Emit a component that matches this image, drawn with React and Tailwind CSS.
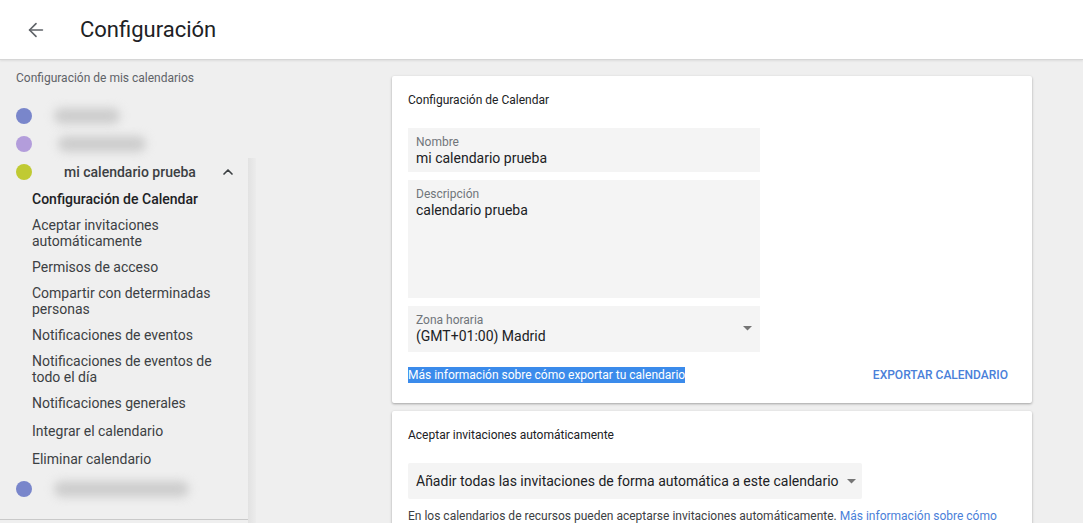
import React from 'react';
import { ArrowLeft, ChevronUp } from 'lucide-react';

const subItems = [
    { label: 'Configuración de Calendar', active: true },
    { label: 'Aceptar invitaciones\nautomáticamente' },
    { label: 'Permisos de acceso' },
    { label: 'Compartir con determinadas\npersonas' },
    { label: 'Notificaciones de eventos' },
    { label: 'Notificaciones de eventos de\ntodo el día' },
    { label: 'Notificaciones generales' },
    { label: 'Integrar el calendario', loose: true },
    { label: 'Eliminar calendario', loose: true },
];

const Caret = () => (
    <svg width="9" height="5" viewBox="0 0 9 5" className="shrink-0">
        <path d="M0 0 L9 0 L4.5 4.5 Z" fill="#757575" />
    </svg>
);

const Field = ({ label, value, className = '' }) => (
    <div className={`w-[352px] bg-[#f4f4f4] px-2 ${className}`}>
        <div className="text-[12px] leading-[14px] text-[#70757a]">{label}</div>
        <div className="text-[14px] leading-[18px] text-[#202124]">{value}</div>
    </div>
);

const CalendarRow = ({ color, className = '', children }) => (
    <div className={`h-[28px] flex items-center pl-4 ${className}`}>
        <span className="w-4 h-4 rounded-full shrink-0" style={{ backgroundColor: color }}></span>
        {children}
    </div>
);

const Blur = ({ w, ml }) => (
    <div className={`h-[16px] rounded-full bg-[#cdcdcd] blur-[5px] ${w} ${ml}`}></div>
);

const App = () => {
    return (
        <div className="h-[523px] overflow-hidden bg-[#efefef] flex flex-col" style={{ fontFamily: 'Roboto, "Noto Sans", sans-serif' }}>
            {/* Header */}
            <header className="h-[60px] shrink-0 bg-white border-b border-[#d6d6d6] shadow-[0_1px_2px_rgba(0,0,0,0.08)] flex items-center">
                <ArrowLeft size={22} strokeWidth={1.8} className="ml-[25px] text-[#5f6368]" />
                <h1 className="ml-[33px] text-[22px] text-[#202124] leading-none">Configuración</h1>
            </header>

            <div className="flex flex-1 min-h-0">
                {/* Sidebar */}
                <aside className="w-[256px] shrink-0 flex flex-col">
                    <div className="pl-4 pt-[11px] text-[12px] leading-[14px] text-[#5f6368]">Configuración de mis calendarios</div>
                    <div className="mt-[17px] w-[248px]">
                        <CalendarRow color="#7986cb"><Blur w="w-[66px]" ml="ml-[22px]" /></CalendarRow>
                        <CalendarRow color="#b39ddb"><Blur w="w-[88px]" ml="ml-[26px]" /></CalendarRow>
                    </div>
                    <div className="flex flex-1">
                        <div className="w-[248px] flex flex-col">
                            <CalendarRow color="#c0ca33">
                                <span className="ml-8 text-[14px] font-medium text-[#3c4043]">mi calendario prueba</span>
                                <ChevronUp size={16} strokeWidth={2.5} className="ml-auto mr-[12px] text-[#3c4043]" />
                            </CalendarRow>
                            <ul>
                                {subItems.map((item) => (
                                    <li
                                        key={item.label}
                                        className={`pl-8 text-[14px] leading-[16px] whitespace-pre-line ${item.loose ? 'pt-[7px] pb-[5px]' : 'py-[5px]'} ${item.active ? 'font-medium text-[#202124]' : 'text-[#3c4043]'}`}
                                    >
                                        {item.label}
                                    </li>
                                ))}
                            </ul>
                            <CalendarRow color="#7986cb" className="mt-[3px]"><Blur w="w-[135px]" ml="ml-[22px]" /></CalendarRow>
                            <div className="mt-[16px] h-px bg-[#c9c9c9]"></div>
                        </div>
                        <div className="w-[8px] bg-gradient-to-r from-[#e2e2e2] to-[#ececec]"></div>
                    </div>
                </aside>

                {/* Main */}
                <main className="flex-1 pl-[136px] pt-4">
                    <section className="w-[640px] bg-white rounded-[2px] shadow-[0_1px_3px_rgba(0,0,0,0.22),0_1px_2px_rgba(0,0,0,0.12)] px-4 pt-4 pb-[20px]">
                        <h2 className="text-[12px] leading-[16px] text-[#202124]">Configuración de Calendar</h2>
                        <Field label="Nombre" value="mi calendario prueba" className="mt-[20px] h-[44px] pt-[7px]" />
                        <Field label="Descripción" value="calendario prueba" className="mt-2 h-[118px] pt-[7px]" />
                        <div className="mt-2 w-[352px] h-[46px] bg-[#f4f4f4] pl-2 pr-[8px] pt-[7px] flex">
                            <div className="flex-1">
                                <div className="text-[12px] leading-[14px] text-[#70757a]">Zona horaria</div>
                                <div className="text-[14px] leading-[18px] text-[#202124]">(GMT+01:00) Madrid</div>
                            </div>
                            <div className="pt-[13px]"><Caret /></div>
                        </div>
                        <div className="mt-[15px] flex items-center justify-between pr-2">
                            <span className="text-[12px] leading-[16px] bg-[#3b8beb] text-white">Más información sobre cómo exportar tu calendario</span>
                            <span className="text-[12px] leading-[16px] font-medium text-[#4a80d9]">EXPORTAR CALENDARIO</span>
                        </div>
                    </section>

                    <section className="mt-2 w-[640px] h-[200px] bg-white rounded-[2px] shadow-[0_1px_3px_rgba(0,0,0,0.22),0_1px_2px_rgba(0,0,0,0.12)] px-4 pt-4">
                        <h2 className="text-[12px] leading-[16px] text-[#202124]">Aceptar invitaciones automáticamente</h2>
                        <div className="mt-[20px] w-[454px] h-[36px] bg-[#f4f4f4] rounded-[2px] pl-2 flex items-center gap-[8px]">
                            <span className="text-[14px] text-[#202124] whitespace-nowrap">Añadir todas las invitaciones de forma automática a este calendario</span>
                            <Caret />
                        </div>
                        <p className="mt-[9px] text-[12px] leading-[16px] text-[#3c4043] whitespace-nowrap">
                            En los calendarios de recursos pueden aceptarse invitaciones automáticamente.{' '}
                            <span className="text-[#4a80d9]">Más información sobre cómo</span>
                        </p>
                    </section>
                </main>
            </div>
        </div>
    );
};

export default App;
